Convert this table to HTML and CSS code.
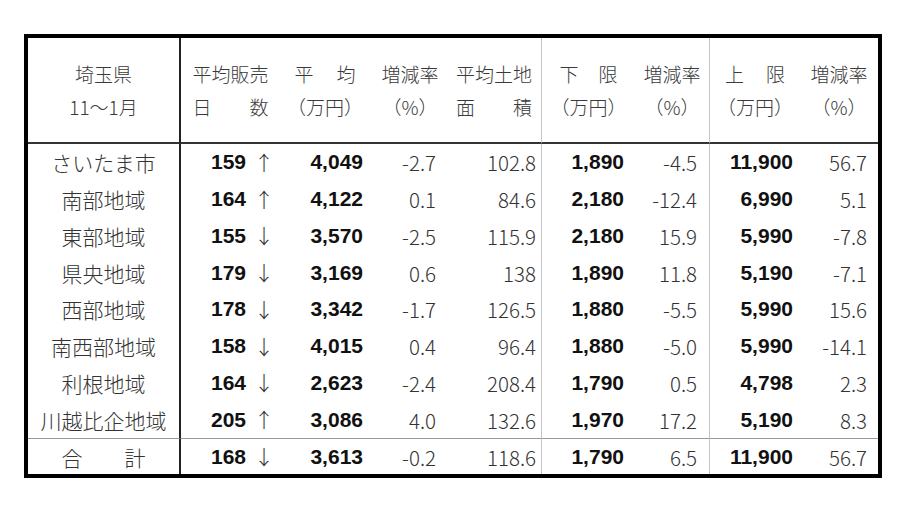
FILE: index.html
```html
<!DOCTYPE html>
<html lang="ja">
<head>
<meta charset="utf-8">
<title>埼玉県 11～1月</title>
<link rel="stylesheet" href="styles.css">
</head>
<body>
<div class="sheet">
  <div class="tbl">
    <div class="row head">
      <div class="cell"><div class="hl">埼玉県</div><div class="hl">11～1月</div></div>
      <div class="cell"><div class="hl">平均販売</div><div class="hl sp w76"><span>日</span><span>数</span></div></div>
      <div class="cell"><div class="hl sp w61"><span>平</span><span>均</span></div><div class="hl">（万円）</div></div>
      <div class="cell"><div class="hl">増減率</div><div class="hl">（%）</div></div>
      <div class="cell"><div class="hl">平均土地</div><div class="hl sp w76"><span>面</span><span>積</span></div></div>
      <div class="cell"><div class="hl sp w58"><span>下</span><span>限</span></div><div class="hl">（万円）</div></div>
      <div class="cell"><div class="hl">増減率</div><div class="hl">（%）</div></div>
      <div class="cell"><div class="hl sp w60"><span>上</span><span>限</span></div><div class="hl">（万円）</div></div>
      <div class="cell"><div class="hl">増減率</div><div class="hl">（%）</div></div>
    </div>

    <div class="row">
      <div class="cell lbl">さいたま市</div>
      <div class="cell n b">159 <span class="arr">↑</span></div>
      <div class="cell n b">4,049</div>
      <div class="cell n l">-2.7</div>
      <div class="cell n l">102.8</div>
      <div class="cell n b">1,890</div>
      <div class="cell n l">-4.5</div>
      <div class="cell n b">11,900</div>
      <div class="cell n l">56.7</div>
    </div>
    <div class="row">
      <div class="cell lbl">南部地域</div>
      <div class="cell n b">164 <span class="arr">↑</span></div>
      <div class="cell n b">4,122</div>
      <div class="cell n l">0.1</div>
      <div class="cell n l">84.6</div>
      <div class="cell n b">2,180</div>
      <div class="cell n l">-12.4</div>
      <div class="cell n b">6,990</div>
      <div class="cell n l">5.1</div>
    </div>
    <div class="row">
      <div class="cell lbl">東部地域</div>
      <div class="cell n b">155 <span class="arr">↓</span></div>
      <div class="cell n b">3,570</div>
      <div class="cell n l">-2.5</div>
      <div class="cell n l">115.9</div>
      <div class="cell n b">2,180</div>
      <div class="cell n l">15.9</div>
      <div class="cell n b">5,990</div>
      <div class="cell n l">-7.8</div>
    </div>
    <div class="row">
      <div class="cell lbl">県央地域</div>
      <div class="cell n b">179 <span class="arr">↓</span></div>
      <div class="cell n b">3,169</div>
      <div class="cell n l">0.6</div>
      <div class="cell n l">138</div>
      <div class="cell n b">1,890</div>
      <div class="cell n l">11.8</div>
      <div class="cell n b">5,190</div>
      <div class="cell n l">-7.1</div>
    </div>
    <div class="row">
      <div class="cell lbl">西部地域</div>
      <div class="cell n b">178 <span class="arr">↓</span></div>
      <div class="cell n b">3,342</div>
      <div class="cell n l">-1.7</div>
      <div class="cell n l">126.5</div>
      <div class="cell n b">1,880</div>
      <div class="cell n l">-5.5</div>
      <div class="cell n b">5,990</div>
      <div class="cell n l">15.6</div>
    </div>
    <div class="row">
      <div class="cell lbl">南西部地域</div>
      <div class="cell n b">158 <span class="arr">↓</span></div>
      <div class="cell n b">4,015</div>
      <div class="cell n l">0.4</div>
      <div class="cell n l">96.4</div>
      <div class="cell n b">1,880</div>
      <div class="cell n l">-5.0</div>
      <div class="cell n b">5,990</div>
      <div class="cell n l">-14.1</div>
    </div>
    <div class="row">
      <div class="cell lbl">利根地域</div>
      <div class="cell n b">164 <span class="arr">↓</span></div>
      <div class="cell n b">2,623</div>
      <div class="cell n l">-2.4</div>
      <div class="cell n l">208.4</div>
      <div class="cell n b">1,790</div>
      <div class="cell n l">0.5</div>
      <div class="cell n b">4,798</div>
      <div class="cell n l">2.3</div>
    </div>
    <div class="row">
      <div class="cell lbl">川越比企地域</div>
      <div class="cell n b">205 <span class="arr">↑</span></div>
      <div class="cell n b">3,086</div>
      <div class="cell n l">4.0</div>
      <div class="cell n l">132.6</div>
      <div class="cell n b">1,970</div>
      <div class="cell n l">17.2</div>
      <div class="cell n b">5,190</div>
      <div class="cell n l">8.3</div>
    </div>
    <div class="row total">
      <div class="cell lbl">合　　計</div>
      <div class="cell n b">168 <span class="arr">↓</span></div>
      <div class="cell n b">3,613</div>
      <div class="cell n l">-0.2</div>
      <div class="cell n l">118.6</div>
      <div class="cell n b">1,790</div>
      <div class="cell n l">6.5</div>
      <div class="cell n b">11,900</div>
      <div class="cell n l">56.7</div>
    </div>
  </div>
</div>
</body>
</html>
```

FILE: styles.css
```css
html, body {
  margin: 0;
  padding: 0;
  background: #ffffff;
}

body {
  font-family: "Noto Sans CJK JP", "Noto Sans", sans-serif;
  color: #333333;
}

.sheet {
  width: 850px;
  margin: 34px 0 0 24px;
  border: 4px solid #000000;
}

.tbl {
  display: grid;
  grid-template-columns: 153px 99px 90px 77px 95px 93px 75px 90px 78px;
  grid-template-rows: 106px repeat(8, 36.75px) 36px;
}

.row {
  display: contents;
}

.cell {
  box-sizing: border-box;
  display: flex;
  align-items: center;
  white-space: nowrap;
}

.row > .cell:nth-child(1) {
  border-right: 2px solid #222222;
}

.row > .cell:nth-child(5),
.row > .cell:nth-child(7) {
  border-right: 1px solid #c4c4c4;
}

/* header */
.head > .cell {
  flex-direction: column;
  justify-content: center;
  border-bottom: 2px solid #333333;
  font-size: 19px;
  font-weight: 300;
  color: #3a3a3a;
}

.hl {
  height: 33px;
  line-height: 33px;
  text-align: center;
}

.sp {
  display: flex;
  justify-content: space-between;
}

.w76 { width: 76px; }
.w61 { width: 61px; }
.w60 { width: 60px; }
.w58 { width: 58px; }

.head > .cell:nth-child(4) { padding-left: 3px; }

/* body */
.lbl {
  justify-content: center;
  font-size: 21px;
  font-weight: 300;
  color: #333333;
}

.n {
  justify-content: flex-end;
}

.b {
  font-family: "Liberation Sans", Arial, sans-serif;
  font-weight: 700;
  font-size: 21px;
  color: #111111;
}

.l {
  font-family: "Noto Sans CJK JP", "Noto Sans", sans-serif;
  font-weight: 300;
  font-size: 20.5px;
  color: #333333;
}

.arr {
  font-family: "Noto Sans CJK JP", sans-serif;
  font-weight: 300;
  font-size: 20px;
  color: #333333;
  margin-left: 8px;
}

.row > .cell.n:nth-child(2) { padding-right: 6px; }
.row > .cell.n:nth-child(3) { padding-right: 7px; }
.row > .cell.n:nth-child(4) { padding-right: 11px; }
.row > .cell.n:nth-child(5) { padding-right: 5px; }
.row > .cell.n:nth-child(6) { padding-right: 11px; }
.row > .cell.n:nth-child(7) { padding-right: 12px; }
.row > .cell.n:nth-child(8) { padding-right: 7px; }
.row > .cell.n:nth-child(9) { padding-right: 11px; }

.total > .cell {
  border-top: 1px solid #9a9a9a;
}
```
